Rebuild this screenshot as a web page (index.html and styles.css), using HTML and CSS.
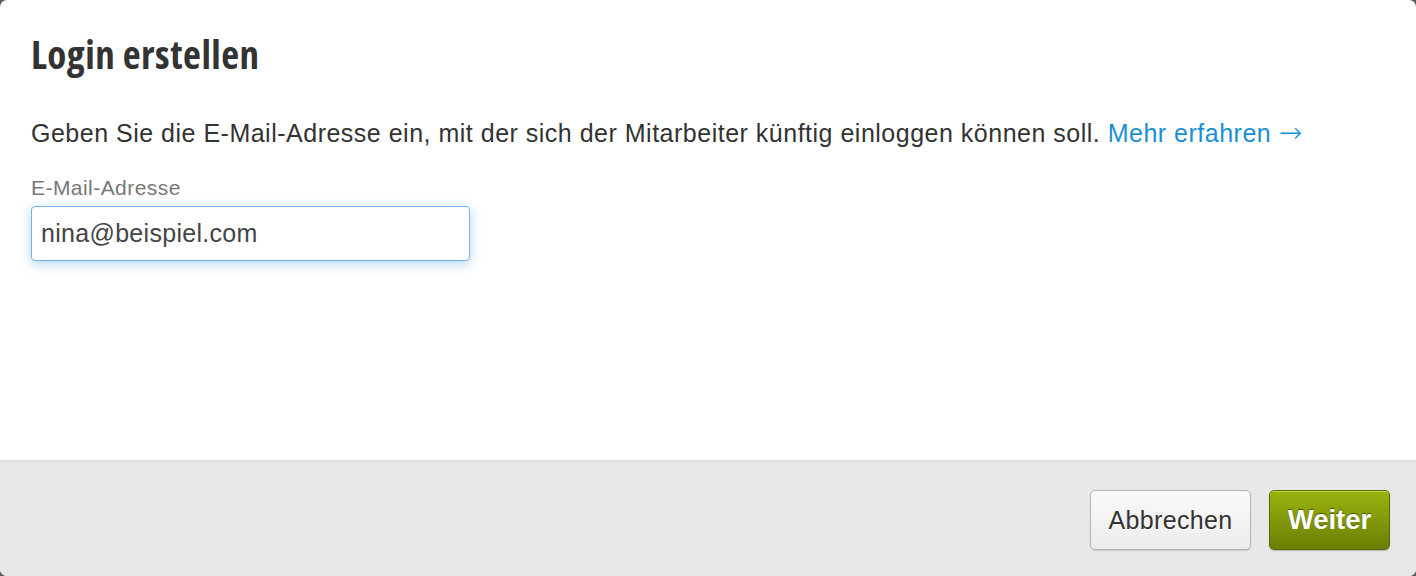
FILE: index.html
```html
<!DOCTYPE html>
<html lang="de">
<head>
<meta charset="utf-8">
<title>Login erstellen</title>
<link rel="stylesheet" href="styles.css">
</head>
<body>
<div class="dialog">
  <div class="content">
    <h1 class="title">Login erstellen</h1>
    <p class="intro">Geben Sie die E-Mail-Adresse ein, mit der sich der Mitarbeiter künftig einloggen können soll. <a class="more" href="#">Mehr erfahren <span class="arrow">→</span></a></p>
    <label class="label" for="email">E-Mail-Adresse</label>
    <input class="input" id="email" type="text" value="nina@beispiel.com">
  </div>
  <div class="footer">
    <button class="btn btn-cancel">Abbrechen</button>
    <button class="btn btn-primary">Weiter</button>
  </div>
</div>
</body>
</html>
```

FILE: styles.css
```css
html, body {
  margin: 0;
  padding: 0;
  height: 100%;
  background: #5a5a5a;
}
body {
  font-family: "Liberation Sans", Arial, Helvetica, sans-serif;
  color: #333;
}
.dialog {
  width: 1416px;
  height: 576px;
  background: #fff;
  border-radius: 7px;
  overflow: hidden;
  display: flex;
  flex-direction: column;
}
.content {
  flex: 1;
  padding: 29px 31px 0 31px;
  display: flex;
  flex-direction: column;
  align-items: flex-start;
}
.title {
  margin: 0;
  font-family: "Open Sans", "Liberation Sans", sans-serif;
  font-stretch: 75%;
  font-weight: 700;
  font-size: 39px;
  line-height: 50px;
  color: #333;
  letter-spacing: 0.5px;
}
.intro {
  margin: 40px 0 0 0;
  font-size: 25px;
  line-height: 28px;
  letter-spacing: 0.5px;
  color: #333;
}
.more {
  color: #1a8fd4;
  text-decoration: none;
}
.arrow {
  font-family: "DejaVu Sans", sans-serif;
  font-size: 28px;
  line-height: 20px;
  font-weight: 300;
}
.label {
  margin-top: 29px;
  font-size: 21px;
  line-height: 24px;
  letter-spacing: 0.45px;
  color: #777;
}
.input {
  margin-top: 6px;
  width: 439px;
  height: 55px;
  box-sizing: border-box;
  border: 1px solid #6fb3ea;
  border-radius: 4px;
  box-shadow: 0 3px 12px rgba(82, 168, 236, 0.45);
  padding: 0 9px;
  font-family: "Liberation Sans", Arial, sans-serif;
  font-size: 25px;
  letter-spacing: 0.3px;
  color: #444;
  outline: none;
  background: #fff;
}
.footer {
  background: #e8e8e8;
  border-top: 2px solid #dcdcdc;
  display: flex;
  justify-content: flex-end;
  align-items: flex-start;
  gap: 18px;
  padding: 28px 26px 0 0;
  box-sizing: border-box;
  height: 116px;
}
.btn {
  height: 60px;
  border-radius: 5px;
  font-family: "Liberation Sans", Arial, sans-serif;
  cursor: pointer;
  padding: 0;
}
.btn-cancel {
  width: 161px;
  background: linear-gradient(#fafafa, #ececec);
  border: 1px solid #b4b4b4;
  box-shadow: 0 1px 1px rgba(0,0,0,0.15);
  color: #333;
  font-size: 25px;
  letter-spacing: 0.35px;
  text-shadow: 0 1px 0 #fff;
}
.btn-primary {
  width: 121px;
  background: linear-gradient(#9ab30f, #6c7e04);
  border: 1px solid #5a6a05;
  box-shadow: inset 0 1px 0 #c4d84a, 0 1px 1px rgba(0,0,0,0.2);
  color: #fff;
  font-weight: 700;
  font-size: 27.5px;
  text-shadow: 0 -1px 1px rgba(0,0,0,0.45);
}
```
